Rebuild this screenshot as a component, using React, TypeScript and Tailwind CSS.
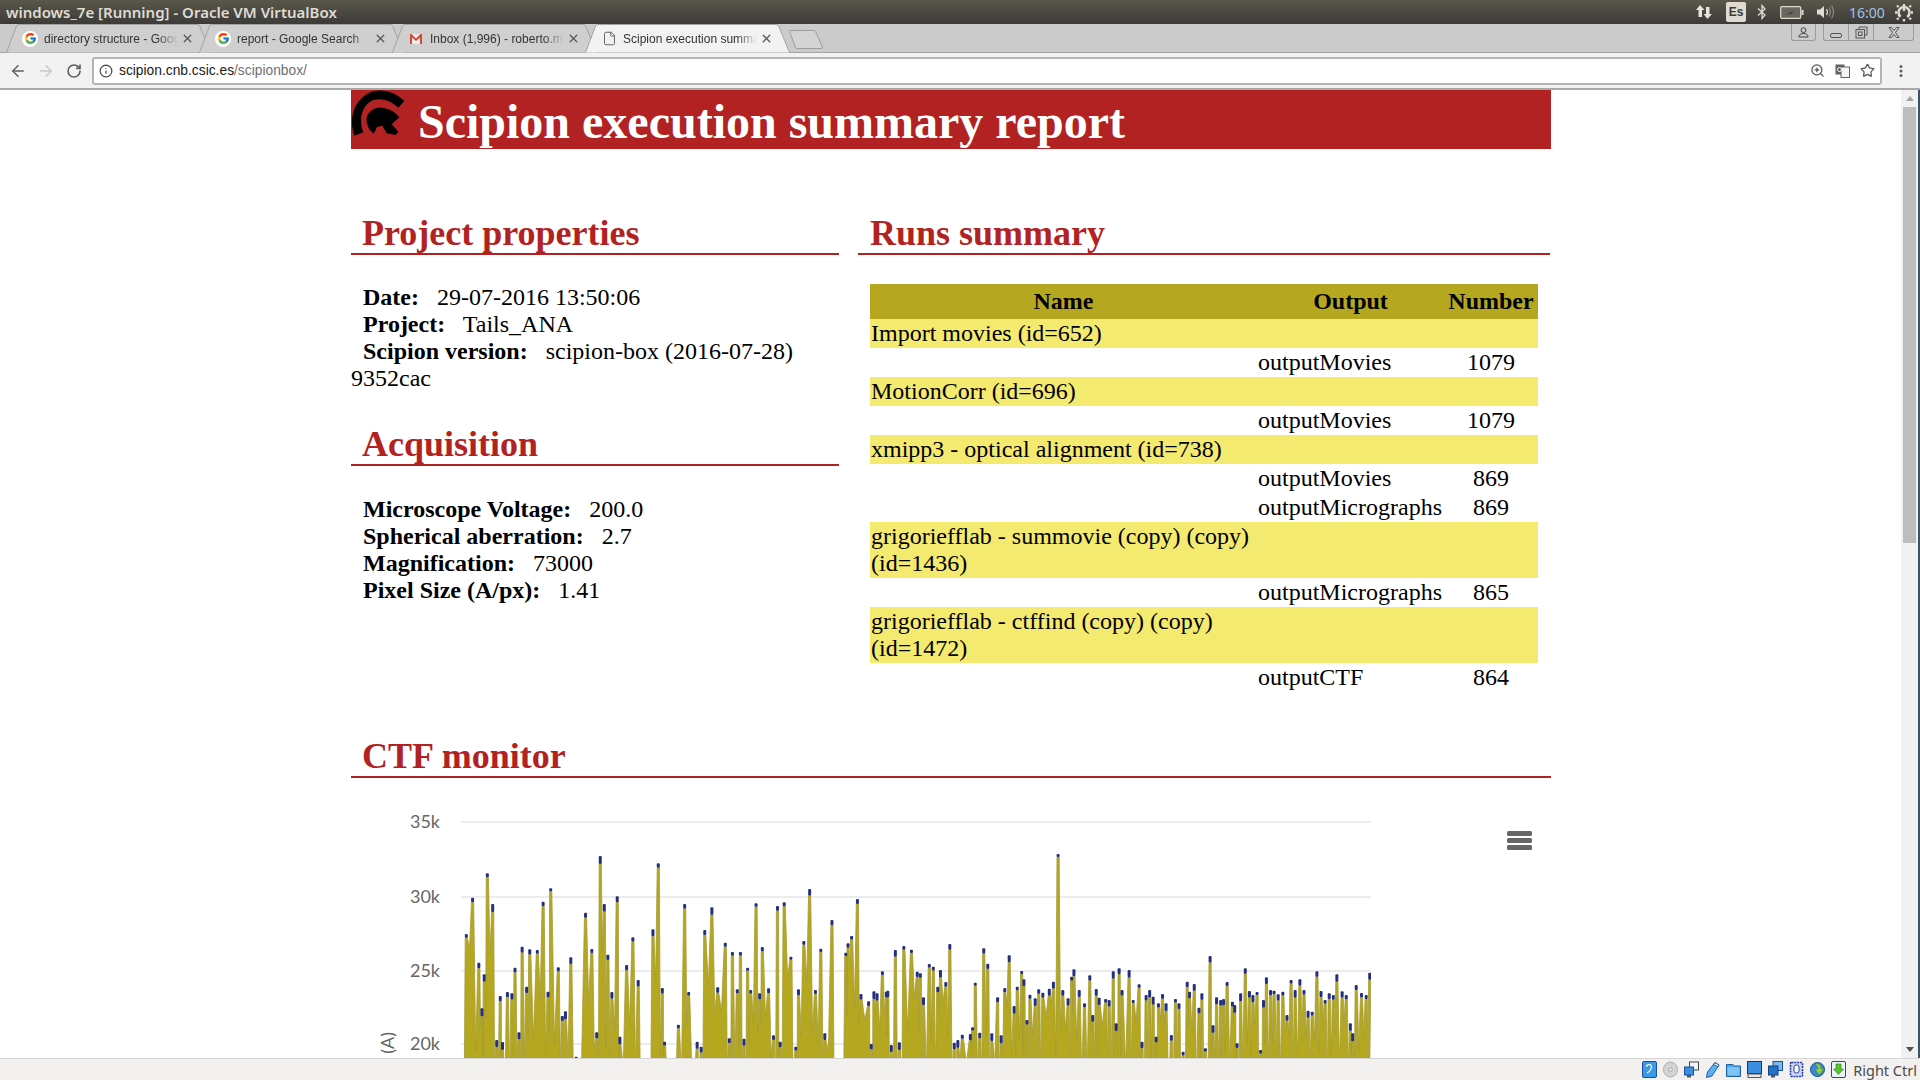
import React from "react";
import { ArrowLeft, ArrowRight, RotateCw, Info, Star, ZoomIn, File as FileIcon, X } from "lucide-react";
import { FcGoogle } from "react-icons/fc";

const A: number[][] = [[283,402],[297,293],[311,488],[318,625],[323,523],[330,220],[342,312],[351,720],[359,588],[364,726],[375,576],[385,580],[392,503],[401,697],[408,440],[418,560],[425,448],[442,450],[455,305],[466,575],[472,265],[489,502],[498,648],[505,634],[517,472],[529,770],[550,338],[564,447],[575,697],[583,168],[592,312],[600,464],[609,576],[621,289],[627,710],[642,495],[656,412],[668,540],[701,388],[713,190],[722,564],[727,725],[758,674],[772,312],[781,576],[800,725],[809,740],[817,390],[833,322],[846,562],[863,428],[872,715],[879,456],[890,568],[897,456],[905,716],[913,503],[920,570],[932,310],[940,580],[946,441],[960,565],[971,706],[980,318],[986,725],[995,307],[1010,470],[1021,740],[1027,568],[1039,423],[1052,267],[1065,570],[1077,446],[1086,700],[1102,360],[1133,458],[1138,430],[1146,408],[1159,297],[1167,582],[1184,604],[1190,732],[1196,574],[1203,580],[1215,514],[1224,575],[1227,572],[1235,735],[1244,450],[1253,727],[1263,438],[1280,449],[1293,515],[1300,520],[1307,592],[1320,492],[1329,500],[1339,560],[1345,510],[1357,546],[1366,432],[1376,728],[1384,720],[1394,704],[1412,702],[1417,682],[1423,548],[1433,698],[1442,445],[1451,491],[1460,700],[1473,592],[1481,706],[1489,564],[1499,466],[1510,618],[1517,560],[1527,513],[1532,538]];
const B: number[][] = [[46,660],[51,584],[60,595],[66,568],[73,578],[84,566],[91,545],[99,162],[107,570],[116,595],[122,530],[126,508],[135,570],[144,610],[153,526],[158,645],[164,567],[169,593],[180,597],[186,600],[193,514],[198,670],[203,505],[208,570],[220,510],[227,600],[237,553],[242,725],[249,585],[255,570],[261,590],[266,710],[270,610],[277,582],[283,610],[292,705],[299,597],[305,610],[312,755],[319,545],[323,575],[331,552],[339,623],[344,580],[350,745],[358,468],[363,676],[369,592],[376,600],[381,597],[387,546],[396,605],[400,615],[404,730],[410,580],[418,505],[425,573],[431,585],[438,576],[444,750],[449,600],[454,532],[461,570],[467,572],[474,583],[482,575],[489,645],[496,540],[503,570],[511,538],[518,570],[525,632],[532,635],[540,514],[547,573],[554,600],[561,580],[568,585],[574,523],[583,574],[590,585],[597,670],[601,700],[607,555],[616,579],[624,585],[630,518]];

const peaks = [
  ...A.map(([x, y]) => [340 + x / 2.24, 800 + y / 3]),
  ...B.map(([x, y]) => [1000 + x / 1.704, 800 + y / 3]),
];
const rnd = (i: number) => {
  const v = Math.sin(i * 12.9898) * 43758.5453;
  return v - Math.floor(v);
};
const CHART_TOP = 790;
const tipOf = (i: number) => 3 + rnd(i + 7) * 5;
const areaPath = () => {
  let d = `M${peaks[0][0] - 2},1070`;
  peaks.forEach(([x, y], i) => {
    const t = y + tipOf(i);
    d += ` L${x - 1.1},${t} L${x + 1.1},${t}`;
    const n = peaks[i + 1];
    if (n) {
      const gap = n[0] - x;
      const mid = (x + n[0]) / 2;
      if (gap > 10) d += ` L${x + 2},1070 L${n[0] - 2},1070`;
      else d += ` L${mid},${Math.max(y, n[1]) + 15 + rnd(i) * 80}`;
    }
  });
  const last = peaks[peaks.length - 1];
  return d + ` L${last[0]},1070 Z`;
};

function Chart() {
  const grid = [["35k", 822], ["30k", 897], ["25k", 971], ["20k", 1044]] as const;
  return (
    <svg width="1200" height="290" viewBox={`351 ${CHART_TOP} 1200 290`} className="block">
      {grid.map(([l, y]) => (
        <g key={l}>
          <line x1="461" x2="1371" y1={y} y2={y} stroke="#e6e6e6" strokeWidth="1.5" />
          <text x="440" y={y + 6} textAnchor="end" fill="#666666" fontSize="18" fontFamily="Lato, sans-serif">{l}</text>
        </g>
      ))}
      <text transform="rotate(-90 394 1032)" x="394" y="1032" textAnchor="end" fill="#666666" fontSize="18" fontFamily="Lato, sans-serif">Defocus (A)</text>
      <clipPath id="plot"><rect x="461" y="800" width="910" height="280" /></clipPath>
      <g clipPath="url(#plot)">
        <path d={areaPath()} fill="#b5a820" stroke="#a39a35" strokeWidth="0.8" />
        {peaks.map(([x, y], i) => (
          <rect key={i} x={x - 1.5} y={y} width="3" height={tipOf(i)} rx="1" fill="#24307f" />
        ))}
      </g>
      <g fill="#666666">
        <rect x="1507" y="831" width="25" height="5" rx="1.5" />
        <rect x="1507" y="838" width="25" height="5" rx="1.5" />
        <rect x="1507" y="845" width="25" height="5" rx="1.5" />
      </g>
    </svg>
  );
}

function Logo() {
  return (
    <svg width="60" height="49" viewBox="18 15 180 147" className="shrink-0">
      <path fill="#000" d="M28,152 C10,100 25,40 85,18 C115,12 150,20 178,48 L160,68 C135,45 110,38 85,45 C50,58 40,105 55,142 Z" />
      <path fill="#000" d="M65,112 C60,85 85,66 110,68 C135,70 155,85 163,97 L140,118 L160,140 L152,150 L125,145 L112,122 L96,126 L86,146 L72,132 Z" />
    </svg>
  );
}

function TabShape({ active }: { active?: boolean }) {
  return (
    <svg className="absolute inset-0" width="205" height="29" viewBox="0 0 205 29">
      <path
        d="M0.5,28.5 L10.5,2 Q11,0.5 13,0.5 L191,0.5 Q193,0.5 193.7,2 L204.5,28.5"
        fill={active ? "#f2f2f2" : "#cfcfcf"}
        stroke="#a3a3a3"
      />
    </svg>
  );
}

function Gmail() {
  return (
    <svg width="14" height="14" viewBox="0 0 14 14" className="shrink-0">
      <rect x="1" y="2" width="12" height="10" fill="#ececec" />
      <path d="M1,12 V2 H2.5 L7,6.5 L11.5,2 H13 V12 H11 V5.5 L7,9 L3,5.5 V12 Z" fill="#d14836" />
    </svg>
  );
}

function Tab({ icon, text, active }: { icon: React.ReactNode; text: string; active?: boolean }) {
  return (
    <div className="relative w-[205px] h-[29px] -mr-[12px] shrink-0" style={{ zIndex: active ? 5 : 1 }}>
      <TabShape active={active} />
      <div className="relative flex items-center h-[29px] pl-[16px]">
        <div className="w-[16px] h-[16px] flex items-center justify-center shrink-0">{icon}</div>
        <div className="ml-[6px] w-[134px] overflow-hidden whitespace-nowrap text-[12px] text-[#333333] [mask-image:linear-gradient(to_right,black_85%,transparent)]">{text}</div>
        <X size={13} strokeWidth={2.6} className="ml-[3px] text-[#5a5a5a]" />
      </div>
    </div>
  );
}

const G = () => (
  <span className="flex items-center justify-center w-[16px] h-[16px] rounded-full bg-white">
    <FcGoogle size={13} />
  </span>
);

function TopTray() {
  return (
    <div className="flex items-center h-[24px] text-[#dfdbd2]">
      <svg width="18" height="16" viewBox="0 0 18 16" className="mr-[13px]">
        <path fill="#e8e4da" d="M5,1 L9.5,6 H7 V13 H3.5 V6 H1 Z M12.5,15 L8.5,10 H11 V3 H14.5 V10 H17 Z" />
      </svg>
      <div className="w-[20px] h-[20px] rounded-[2px] bg-[#dfdbd2] flex items-center justify-center text-[#3c3b37] text-[12px] font-bold mr-[11px]">Es</div>
      <svg width="10" height="16" viewBox="0 0 10 16" className="mr-[13px]">
        <path fill="none" stroke="#dfdbd2" strokeWidth="1.3" d="M1,4.5 L8,11 L5,14.5 V1.5 L8,5 L1,11.5" />
      </svg>
      <svg width="24" height="13" viewBox="0 0 24 13" className="mr-[12px]">
        <rect x="0.7" y="0.7" width="20" height="11.6" rx="1" fill="#6a675e" stroke="#dfdbd2" strokeWidth="1.2" />
        <rect x="21.5" y="4" width="2" height="5" fill="#dfdbd2" />
        <path d="M6,9 L12,5.5 L11,7 L16,4 L10,8.5 L11,7.2 Z" fill="#2d2c28" />
      </svg>
      <svg width="20" height="16" viewBox="0 0 20 16" className="mr-[13px]">
        <path fill="#dfdbd2" d="M1,5.5 H4 L8,2 V14 L4,10.5 H1 Z" />
        <path fill="none" stroke="#dfdbd2" strokeWidth="1.2" d="M10.5,5 Q12.5,8 10.5,11" />
        <path fill="none" stroke="#8d8a80" strokeWidth="1.2" d="M13,3.5 Q16,8 13,12.5 M15.5,1.5 Q19.5,8 15.5,14.5" />
      </svg>
      <span className="text-[14px] text-[#a2c2e6] w-[45px] font-['Noto_Sans',sans-serif]">16:00</span>
      <svg width="20" height="20" viewBox="0 0 20 20" className="mr-[6px]">
        <circle cx="10" cy="10.5" r="5.5" fill="none" stroke="#dfdbd2" strokeWidth="2.6" strokeDasharray="28 7" strokeDashoffset="-12" />
        <path stroke="#dfdbd2" strokeWidth="2.4" d="M10,2 V9 M3,10.5 H1 M19,10.5 H17 M10,19.5 V17 M4.5,16 L3,17.5 M15.5,16 L17,17.5 M4.5,5 L3,3.5 M15.5,5 L17,3.5" />
      </svg>
    </div>
  );
}

function WinControls() {
  return (
    <div className="ml-auto flex h-[17px] text-[#555555] mr-[6px]">
      <div className="w-[25px] h-[17px] border border-t-0 border-[#9c9c9c] rounded-b-[3px] flex items-center justify-center">
        <svg width="11" height="11" viewBox="0 0 11 11"><circle cx="5.5" cy="3.2" r="2.4" fill="none" stroke="#444" /><path d="M1,10 Q1,6.5 5.5,6.5 Q10,6.5 10,10 Z" fill="none" stroke="#444" /></svg>
      </div>
      <div className="ml-[7px] w-[91px] h-[17px] border border-t-0 border-[#9c9c9c] rounded-b-[3px] flex">
        <div className="w-[25px] flex items-end justify-center pb-[2px] border-r border-[#9c9c9c]"><div className="w-[12px] h-[5px] border border-[#555] rounded-[2px]" /></div>
        <div className="w-[25px] flex items-center justify-center border-r border-[#9c9c9c]">
          <svg width="13" height="13" viewBox="0 0 13 13"><path d="M4,3 V1 H12 V9 H10" fill="none" stroke="#555" /><rect x="1" y="3.5" width="8.5" height="8.5" fill="none" stroke="#555" /><rect x="3.5" y="6" width="3.5" height="3.5" fill="none" stroke="#555" /></svg>
        </div>
        <div className="flex-1 flex items-center justify-center">
          <svg width="12" height="11" viewBox="0 0 12 11"><path d="M1,0.5 H3.5 L6,3.5 L8.5,0.5 H11 L7.5,5.5 L11,10.5 H8.5 L6,7.5 L3.5,10.5 H1 L4.5,5.5 Z" fill="none" stroke="#555" /></svg>
        </div>
      </div>
    </div>
  );
}

function Toolbar() {
  return (
    <div className="h-[37px] bg-[#f2f2f2] border-b-[2px] border-[#a9a9a9] flex items-center shrink-0">
      <ArrowLeft size={18} strokeWidth={2} className="ml-[9px] text-[#5f5f5f]" />
      <ArrowRight size={18} strokeWidth={2} className="ml-[10px] text-[#c8c8c8]" />
      <RotateCw size={16} strokeWidth={2.4} className="ml-[11px] text-[#5f5f5f]" />
      <div className="ml-[10px] w-[1790px] h-[28px] bg-white border-[2px] border-[#b5b5b5] rounded-[3px] flex items-center">
        <Info size={14} strokeWidth={2} className="ml-[5px] text-[#444444]" />
        <span className="ml-[6px] mt-[2px] text-[13.8px] text-[#202020]">scipion.cnb.csic.es<span className="text-[#707070]">/scipionbox/</span></span>
        <ZoomIn size={15} strokeWidth={2} className="ml-auto text-[#555555]" />
        <svg width="15" height="14" viewBox="0 0 15 14" className="ml-[10px]">
          <rect x="0.5" y="0.5" width="9" height="10" fill="#5f6368" />
          <rect x="6" y="3" width="8.5" height="10.5" fill="#f5f5f5" stroke="#5f6368" />
          <circle cx="4.5" cy="5.5" r="2" fill="none" stroke="#fff" />
        </svg>
        <Star size={15} strokeWidth={2} className="ml-[10px] mr-[5px] text-[#555555]" />
      </div>
      <svg width="4" height="14" viewBox="0 0 4 14" className="ml-[17px]">
        <g fill="#5f5f5f"><rect x="0.5" y="1" width="3" height="3" rx="1.5" /><rect x="0.5" y="5.5" width="3" height="3" rx="1.5" /><rect x="0.5" y="10" width="3" height="3" rx="1.5" /></g>
      </svg>
    </div>
  );
}

const rows: { name?: string; output?: string; n?: string }[] = [
  { name: "Import movies (id=652)" },
  { output: "outputMovies", n: "1079" },
  { name: "MotionCorr (id=696)" },
  { output: "outputMovies", n: "1079" },
  { name: "xmipp3 - optical alignment (id=738)" },
  { output: "outputMovies", n: "869" },
  { output: "outputMicrographs", n: "869" },
  { name: "grigoriefflab - summovie (copy) (copy) (id=1436)" },
  { output: "outputMicrographs", n: "865" },
  { name: "grigoriefflab - ctffind (copy) (copy) (id=1472)" },
  { output: "outputCTF", n: "864" },
];

function RunsTable() {
  return (
    <table className="ml-[12px] mt-[31px] w-[668px] table-fixed border-collapse leading-[27px]">
      <colgroup><col className="w-[387px]" /><col className="w-[187px]" /><col className="w-[94px]" /></colgroup>
      <thead>
        <tr className="h-[35px] bg-[#b5a820] text-center font-bold">
          <th className="p-0">Name</th><th className="p-0">Output</th><th className="p-0">Number</th>
        </tr>
      </thead>
      <tbody>
        {rows.map((r, i) => (
          <tr key={i} className={r.name ? "bg-[#f4ea70]" : ""}>
            <td className="p-px align-top">{r.name}</td>
            <td className="p-px align-top">{r.output}</td>
            <td className="p-px text-center align-top">{r.n}</td>
          </tr>
        ))}
      </tbody>
    </table>
  );
}

const H2 = ({ children, right }: { children: React.ReactNode; right?: boolean }) => (
  <h2 className={`h-[40px] ${right ? "pl-[12px]" : "pl-[11px]"} text-[36px] leading-[41px] font-bold text-[#b22222] border-b-[2px] border-[#b22222] box-content -mb-[2px]`}>{children}</h2>
);

const Prop = ({ k, v }: { k: string; v: string }) => (
  <div>{"\u00a0\u00a0"}<b>{k}</b>{"\u00a0\u00a0 "}{v}</div>
);

function Page() {
  return (
    <div className="w-[1200px] font-['Liberation_Serif',serif] text-[24px] leading-[27px] text-black">
      <div className="h-[59px] bg-[#b22222] flex items-start">
        <Logo />
        <h1 className="ml-[7px] mt-[5px] text-[48px] leading-[54px] font-bold text-white whitespace-nowrap">Scipion execution summary report</h1>
      </div>
      <div className="flex mt-[64px]">
        <div className="w-[488px] shrink-0">
          <H2>Project properties</H2>
          <div className="mt-[31px]">
            <Prop k="Date:" v="29-07-2016 13:50:06" />
            <Prop k="Project:" v="Tails_ANA" />
            <Prop k="Scipion version:" v="scipion-box (2016-07-28) 9352cac" />
          </div>
          <div className="mt-[32px]"><H2>Acquisition</H2></div>
          <div className="mt-[32px]">
            <Prop k="Microscope Voltage:" v="200.0" />
            <Prop k="Spherical aberration:" v="2.7" />
            <Prop k="Magnification:" v="73000" />
            <Prop k="Pixel Size (A/px):" v="1.41" />
          </div>
        </div>
        <div className="ml-[19px] w-[692px] shrink-0">
          <H2 right>Runs summary</H2>
          <RunsTable />
        </div>
      </div>
      <div className="mt-[44px]"><H2>CTF monitor</H2></div>
      <div className="mt-[14px]"><Chart /></div>
    </div>
  );
}

function Scrollbar() {
  return (
    <div className="w-[17px] bg-[#f1f1f1] flex flex-col items-center shrink-0">
      <div className="h-[17px] flex items-center justify-center">
        <div className="w-0 h-0 border-x-[4px] border-x-transparent border-b-[5px] border-b-[#a3a3a3]" />
      </div>
      <div className="w-[13px] h-[436px] bg-[#bdbdbd]" />
      <div className="mt-auto h-[17px] flex items-center justify-center">
        <div className="w-0 h-0 border-x-[4px] border-x-transparent border-t-[5px] border-t-[#505050]" />
      </div>
    </div>
  );
}

function StatusBar() {
  const blue = "#3b8fe0";
  return (
    <div className="h-[22px] bg-[#f2f1f0] border-t border-[#d6d6d6] flex items-center justify-end shrink-0 font-['Noto_Sans',sans-serif]">
      <div className="flex items-center gap-[6px] mr-[7px]">
        <svg width="15" height="17" viewBox="0 0 15 17"><rect x="0.5" y="0.5" width="14" height="16" rx="1.5" fill="#3c9be8" stroke="#1d4f96" /><path d="M5,12 Q9,10 9.5,6 A2.5,2.5 0 0 0 4.5,6" fill="none" stroke="#fff" strokeWidth="1.2" /></svg>
        <svg width="15" height="17" viewBox="0 0 15 17"><ellipse cx="7.5" cy="8.5" rx="7" ry="7.5" fill="#d4d4d4" stroke="#acacac" /><circle cx="7.5" cy="8.5" r="1.8" fill="#f2f2f2" stroke="#a0a0a0" /></svg>
        <svg width="15" height="17" viewBox="0 0 15 17"><rect x="5.5" y="1" width="9" height="8" fill="#f4f4f4" stroke="#444" /><rect x="0.5" y="6" width="9" height="8" fill={blue} stroke="#1d4f96" /><rect x="3" y="14" width="4" height="2.5" fill="#555" /></svg>
        <svg width="15" height="17" viewBox="0 0 15 17"><path d="M10,1.5 L14,4 L7,15 L1.5,16.5 L2.5,11 Z" fill="#5cb0f0" stroke="#1d5fa8" /><path d="M10,1.5 L14,4 L12.8,6 L8.8,3.5 Z" fill="#e8f3fb" stroke="#1d5fa8" /></svg>
        <svg width="15" height="17" viewBox="0 0 15 17"><path d="M0.5,3.5 H7 L8,5 H14.5 V15.5 H0.5 Z" fill="#4aa5ee" stroke="#1d5fa8" /><rect x="1.5" y="6" width="12" height="8.5" fill="#7cc3f6" /></svg>
        <svg width="15" height="17" viewBox="0 0 15 17"><rect x="0.5" y="0.5" width="14" height="12" fill={blue} stroke="#333" /><rect x="1" y="13" width="13" height="3.5" fill="#e8e8e8" stroke="#555" /></svg>
        <svg width="15" height="17" viewBox="0 0 15 17"><rect x="5" y="0.5" width="9.5" height="9" fill="#7cb7ee" stroke="#1d4f96" /><rect x="0.5" y="5" width="9.5" height="9" fill="#2271c9" stroke="#163f80" /><rect x="3" y="14" width="4" height="2.5" fill="#555" /></svg>
        <svg width="15" height="17" viewBox="0 0 15 17"><rect x="1.5" y="1.5" width="12" height="14" rx="1" fill="#cfd8f5" stroke="#2a3f9f" strokeWidth="1.6" strokeDasharray="2 0.8" /><rect x="5" y="4" width="5" height="8" rx="2" fill="#fff" stroke="#2a3f9f" /></svg>
        <svg width="15" height="17" viewBox="0 0 15 17"><circle cx="7.5" cy="8.5" r="7" fill="#3c88d8" stroke="#1d4f96" /><path d="M6,2 Q11,3 11,8 L14,8 L9,14 L5,8 L8,8 Q8,5 6,4 Z" fill="#8fd13f" stroke="#4c8a12" strokeWidth="0.6" /></svg>
        <svg width="15" height="17" viewBox="0 0 15 17"><rect x="0.5" y="0.5" width="14" height="16" rx="1.5" fill="#e9f3fb" stroke="#1d4f96" /><path d="M5,3 H10 V8 H12.5 L7.5,13.5 L2.5,8 H5 Z" fill="#55c72a" stroke="#2d7c12" strokeWidth="0.6" /></svg>
      </div>
      <span className="text-[14.5px] leading-[20px] text-[#4a4a4a] mr-[3px]">Right Ctrl</span>
    </div>
  );
}

export default function App() {
  return (
    <div className="w-[1920px] h-[1080px] flex flex-col overflow-hidden bg-white font-['Liberation_Sans',sans-serif]">
      <div className="h-[24px] shrink-0 bg-gradient-to-b from-[#5a564c] to-[#3c3b37] flex items-center justify-between">
        <span className="ml-[6px] text-[15px] font-semibold text-[#dfdbd2] font-['Noto_Sans',sans-serif] whitespace-nowrap">windows_7e [Running] - Oracle VM VirtualBox</span>
        <TopTray />
      </div>
      <div className="h-[29px] shrink-0 bg-[#cbcbcb] border-b border-[#a3a3a3] flex items-start pl-[6px] relative">
        <Tab icon={<G />} text="directory structure - Google" />
        <Tab icon={<G />} text="report - Google Search" />
        <Tab icon={<Gmail />} text="Inbox (1,996) - roberto.m" />
        <Tab active icon={<FileIcon size={15} strokeWidth={1.4} className="text-[#555555]" />} text="Scipion execution summary" />
        <svg width="36" height="20" viewBox="0 0 36 20" className="ml-[11px] mt-[6px] shrink-0">
          <path d="M0.5,1.5 Q0.5,0.5 2,0.5 H25 Q26,0.5 26.5,1.5 L33.5,17 Q34,18.5 32,18.5 H8 Q7,18.5 6.5,17.5 Z" fill="#d4d4d4" stroke="#9c9c9c" />
        </svg>
        <WinControls />
      </div>
      <Toolbar />
      <div className="flex-1 flex min-h-0 relative">
        <div className="flex-1 overflow-hidden pl-[351px]"><Page /></div>
        <Scrollbar />
        <div className="w-[2px] bg-[#3f5068] shrink-0" />
      </div>
      <StatusBar />
    </div>
  );
}
